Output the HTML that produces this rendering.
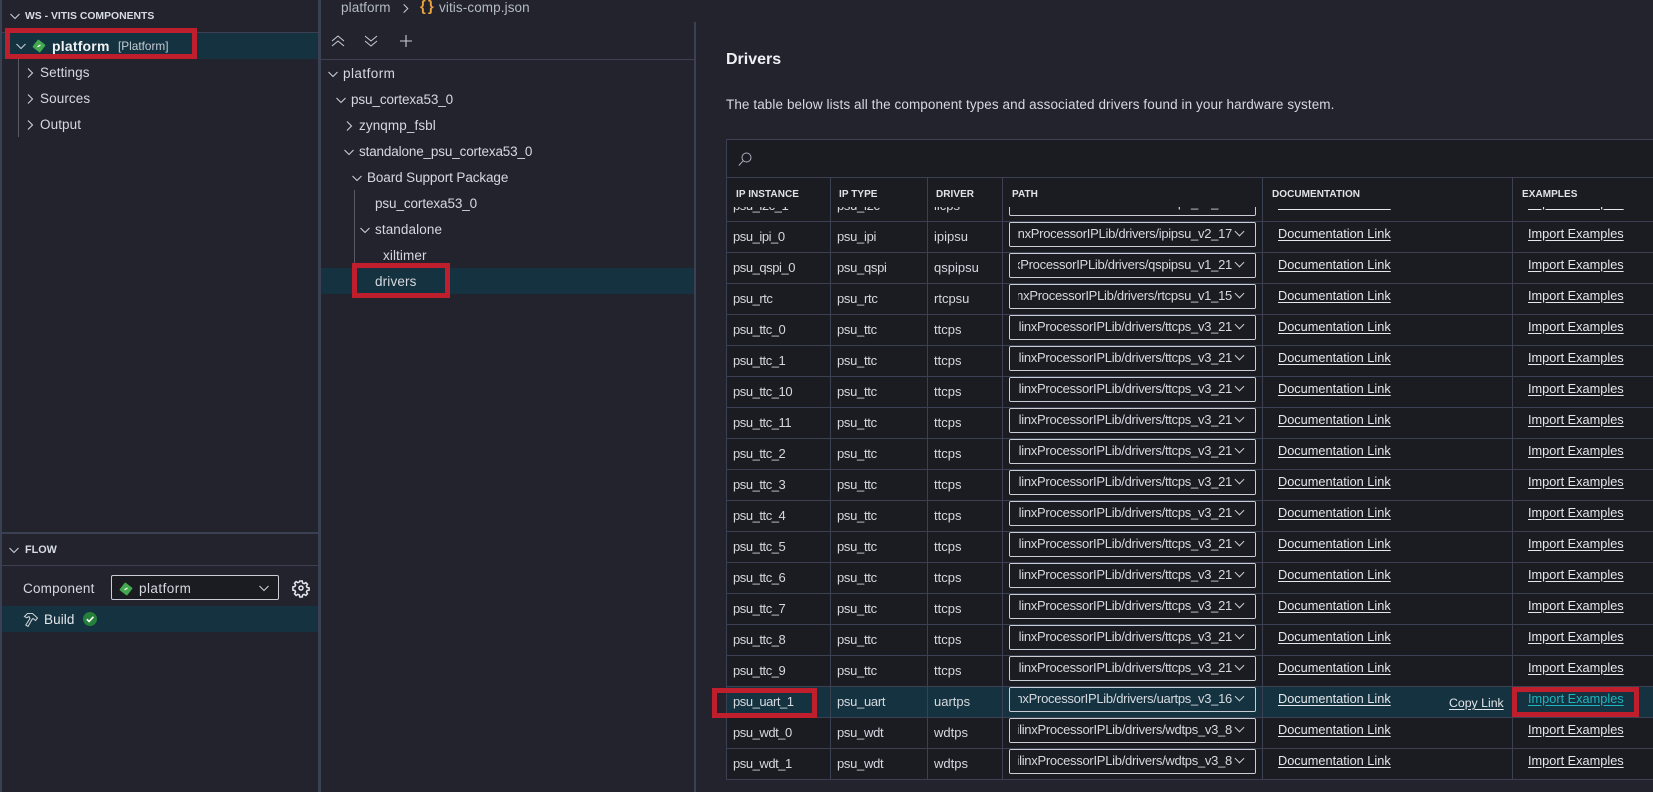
<!DOCTYPE html>
<html lang="en">
<head>
<meta charset="utf-8">
<title>Drivers</title>
<style>
html,body{margin:0;padding:0;background:#22232d}
body{width:1653px;height:792px;overflow:hidden;position:relative;font:13px/18px "Liberation Sans",sans-serif;color:#d5d9df}
.a{position:absolute;white-space:nowrap}
.ln{position:absolute;background:#3b4052}
.sel{position:absolute;background:#14323f}
.red{position:absolute;box-sizing:border-box;border:5px solid #bf1e2c;z-index:5}
svg{position:absolute;overflow:visible;fill:none;stroke:#c9ced6;stroke-width:1.1}
.t{font-size:13.5px;letter-spacing:.1px}
#wrap{position:absolute;left:726px;top:207px;width:927px;height:573px;overflow:hidden}
table{position:absolute;left:0;top:-16px;border-collapse:separate;border-spacing:0;table-layout:fixed;width:927px;background:#1b1c22}
td{box-sizing:border-box;height:31px;padding:0;border-bottom:1px solid #3b4052;border-right:1px solid #3b4052;white-space:nowrap;vertical-align:middle}
td:nth-child(1){border-left:1px solid #3b4052;padding-left:6px;letter-spacing:-.45px}
td:nth-child(2){padding-left:6px;letter-spacing:-.3px}
td:nth-child(3){padding-left:6px}
td:nth-child(4),td:nth-child(5),td:nth-child(6){position:relative;vertical-align:top}
td:nth-child(6){border-right:0}
tr.on td{background:#14323f}
.s{position:absolute;left:6px;top:0;width:247px;height:25px;box-sizing:border-box;border:1px solid #c9ced6;border-radius:2px;background:#1b1c22;overflow:hidden}
tr.on .s{background:#14323f}
.s span{position:absolute;right:23px;top:2px;white-space:nowrap;font-size:13px;letter-spacing:-.28px;color:#d5d9df}
.s::before{content:"";position:absolute;left:0;top:0;width:8px;height:23px;background:inherit;z-index:1}
.s::after{content:"";position:absolute;right:12px;top:5px;width:6px;height:6px;border-right:1.2px solid #c9ced6;border-bottom:1.2px solid #c9ced6;transform:rotate(45deg)}
.s i{position:absolute;right:0;top:0;width:23px;height:23px;background:inherit}
u{position:absolute;top:3px;color:#e4e7eb;text-underline-offset:2px;font-size:12.75px}
td:nth-child(5) u{left:15px}
td:nth-child(6) u{left:15px}
.h{position:absolute;top:186px;font-size:10px;font-weight:bold;color:#dfe3e8;letter-spacing:.05px}
</style>
</head>
<body>
<svg width="0" height="0" style="position:absolute"><defs>
<symbol id="d" viewBox="0 0 12 12" overflow="visible"><path d="M1.5 4l4.5 4.5L10.5 4"/></symbol>
<symbol id="r" viewBox="0 0 12 12" overflow="visible"><path d="M4 1.5l4.5 4.5L4 10.5"/></symbol>
<symbol id="g" viewBox="0 0 14 14"><rect x="2.2" y="2.2" width="9.600" height="9.600" rx="1" fill="#43a84e" stroke="none" transform="rotate(38 7 7)"/><path d="M5.500 7.800l3-1.800" stroke="#fff" stroke-width="1.200"/></symbol>
</defs></svg>

<!-- left panel -->
<div class="ln" style="left:0;top:0;width:2px;height:792px"></div>
<div class="ln" style="left:318px;top:0;width:3px;height:792px"></div>
<svg style="left:9px;top:10px" width="12" height="12"><use href="#d"/></svg>
<div class="a" style="left:25px;top:8px;font-size:10.4px;font-weight:bold;color:#d8dce2">WS - VITIS COMPONENTS</div>
<div class="ln" style="left:2px;top:32px;width:316px;height:1px"></div>
<div class="sel" style="left:2px;top:33px;width:316px;height:26px"></div>
<svg style="left:15px;top:40px" width="12" height="12"><use href="#d"/></svg>
<svg style="left:32px;top:39px" width="14" height="14"><use href="#g"/></svg>
<div class="a" style="left:52px;top:37px;font-size:14px;font-weight:bold;color:#f0f2f4;letter-spacing:.2px">platform</div>
<div class="a" style="left:118px;top:37px;font-size:11.8px;color:#c4cad2">[Platform]</div>
<div class="red" style="left:5px;top:28px;width:192px;height:31px"></div>
<div class="ln" style="left:18px;top:59px;width:1px;height:78px;background:#555a66"></div>
<svg style="left:24px;top:67px" width="12" height="12"><use href="#r"/></svg>
<div class="a t" style="left:40px;top:64px">Settings</div>
<svg style="left:24px;top:93px" width="12" height="12"><use href="#r"/></svg>
<div class="a t" style="left:40px;top:90px">Sources</div>
<svg style="left:24px;top:119px" width="12" height="12"><use href="#r"/></svg>
<div class="a t" style="left:40px;top:116px">Output</div>

<div class="ln" style="left:2px;top:532px;width:316px;height:2px"></div>
<svg style="left:8px;top:544px" width="12" height="12"><use href="#d"/></svg>
<div class="a" style="left:25px;top:541px;font-size:10.8px;font-weight:bold;color:#d8dce2">FLOW</div>
<div class="ln" style="left:2px;top:565px;width:316px;height:1px"></div>
<div class="a t" style="left:23px;top:580px;letter-spacing:.2px">Component</div>
<div class="a" style="left:111px;top:575px;width:168px;height:25px;box-sizing:border-box;border:1px solid #c9ced6;border-radius:2px;background:#1b1c22"></div>
<svg style="left:119px;top:582px" width="14" height="14"><use href="#g"/></svg>
<div class="a t" style="left:139px;top:580px;letter-spacing:.45px">platform</div>
<svg style="left:258px;top:582px" width="12" height="12"><use href="#d"/></svg>
<svg style="left:293px;top:580px;stroke:#e4e7eb;stroke-width:1.500" width="16" height="16" viewBox="0 0 16 16"><circle cx="8" cy="8" r="2"/><path d="M6.800 1h2.400l.4 2 1.500.7 1.800-1.100 1.600 1.600-1.100 1.800.7 1.500 2 .4v2.200l-2 .4-.7 1.500 1.100 1.800-1.600 1.600-1.800-1.100-1.500.7-.4 2H6.800l-.4-2-1.500-.7-1.800 1.100-1.600-1.600 1.100-1.800-.7-1.500-2-.4V6.900l2-.4.7-1.500-1.100-1.800 1.600-1.600 1.800 1.100 1.500-.7z"/></svg>
<div class="sel" style="left:2px;top:606px;width:316px;height:26px"></div>
<svg style="left:24px;top:613px;stroke:#c9ced6" width="14" height="14" viewBox="0 0 14 14"><path d="M.5 3.500L3.500.5h5l5 4.500-2 2.500-2.500-2-1 1L4 13.500 1.800 12 6 5.500 5 3.500 2.800 4.700z"/></svg>
<div class="a t" style="left:44px;top:611px;color:#e4e7eb">Build</div>
<svg style="left:83px;top:612px" width="14" height="14" viewBox="0 0 14 14"><circle cx="7" cy="7" r="7" fill="#25803a" stroke="none"/><path d="M3.800 7.200l2.300 2.300 4.300-4.700" stroke="#fff" stroke-width="1.600"/></svg>

<!-- breadcrumb -->
<div class="a t" style="left:341px;top:-1px;color:#b4bac3">platform</div>
<svg style="left:400px;top:3px" width="11" height="11"><use href="#r"/></svg>
<div class="a" style="left:420px;top:-2px;font-size:15px;font-weight:bold;color:#e8a33d;letter-spacing:2px">{}</div>
<div class="a t" style="left:439px;top:-1px;color:#b4bac3">vitis-comp.json</div>

<!-- tree -->
<svg style="left:331px;top:34px;stroke-width:1" width="14" height="14" viewBox="0 0 14 14"><path d="M1 7l6-5 6 5M1 12l6-5 6 5"/></svg>
<svg style="left:364px;top:34px;stroke-width:1" width="14" height="14" viewBox="0 0 14 14"><path d="M1 2l6 5 6-5M1 7l6 5 6-5"/></svg>
<svg style="left:399px;top:34px;stroke-width:1.100" width="14" height="14" viewBox="0 0 14 14"><path d="M7 1v12M1 7h12"/></svg>
<div class="ln" style="left:321px;top:59px;width:374px;height:1px"></div>
<div class="ln" style="left:694px;top:22px;width:2px;height:770px"></div>
<div class="sel" style="left:321px;top:268px;width:373px;height:26px"></div>
<div class="ln" style="left:354px;top:190px;width:1px;height:78px;background:#555a66"></div>
<svg style="left:327px;top:68px" width="12" height="12"><use href="#d"/></svg>
<div class="a t" style="left:343px;top:65px;letter-spacing:.45px">platform</div>
<svg style="left:335px;top:94px" width="12" height="12"><use href="#d"/></svg>
<div class="a t" style="left:351px;top:91px;letter-spacing:-.1px">psu_cortexa53_0</div>
<svg style="left:343px;top:120px" width="12" height="12"><use href="#r"/></svg>
<div class="a t" style="left:359px;top:117px">zynqmp_fsbl</div>
<svg style="left:343px;top:146px" width="12" height="12"><use href="#d"/></svg>
<div class="a t" style="left:359px;top:143px;letter-spacing:-.15px">standalone_psu_cortexa53_0</div>
<svg style="left:351px;top:172px" width="12" height="12"><use href="#d"/></svg>
<div class="a t" style="left:367px;top:169px;letter-spacing:-.1px">Board Support Package</div>
<div class="a t" style="left:375px;top:195px;letter-spacing:-.1px">psu_cortexa53_0</div>
<svg style="left:359px;top:224px" width="12" height="12"><use href="#d"/></svg>
<div class="a t" style="left:375px;top:221px">standalone</div>
<div class="a t" style="left:383px;top:247px;letter-spacing:.1px">xiltimer</div>
<div class="a t" style="left:375px;top:273px;letter-spacing:.15px">drivers</div>
<div class="red" style="left:352px;top:263px;width:98px;height:35px"></div>

<!-- content -->
<div class="a" style="left:726px;top:50px;font-size:16px;line-height:20px;font-weight:bold;color:#eef0f3">Drivers</div>
<div class="a" style="left:726px;top:96px;font-size:13.5px;letter-spacing:.09px">The table below lists all the component types and associated drivers found in your hardware system.</div>

<div class="a" style="left:726px;top:139px;width:927px;height:68px;background:#1b1c22"></div>
<div class="ln" style="left:726px;top:139px;width:927px;height:1px"></div>
<div class="ln" style="left:726px;top:177px;width:927px;height:1px"></div>
<div class="ln" style="left:726px;top:207px;width:927px;height:1px"></div>
<div class="ln" style="left:726px;top:139px;width:1px;height:68px"></div>
<div class="ln" style="left:830px;top:177px;width:1px;height:30px"></div>
<div class="ln" style="left:927px;top:177px;width:1px;height:30px"></div>
<div class="ln" style="left:1002px;top:177px;width:1px;height:30px"></div>
<div class="ln" style="left:1262px;top:177px;width:1px;height:30px"></div>
<div class="ln" style="left:1512px;top:177px;width:1px;height:30px"></div>
<svg style="left:738px;top:152px;stroke:#aab0ba;stroke-width:1" width="14" height="14" viewBox="0 0 14 14"><circle cx="8.500" cy="5.500" r="4.500"/><path d="M5.300 8.700L.8 13.500"/></svg>
<div class="h" style="left:736px">IP INSTANCE</div>
<div class="h" style="left:839px">IP TYPE</div>
<div class="h" style="left:936px">DRIVER</div>
<div class="h" style="left:1012px">PATH</div>
<div class="h" style="left:1272px">DOCUMENTATION</div>
<div class="h" style="left:1522px">EXAMPLES</div>

<div id="wrap">
<table>
<colgroup><col style="width:105px"><col style="width:97px"><col style="width:75px"><col style="width:260px"><col style="width:250px"><col style="width:140px"></colgroup>
<tr><td>psu_i2c_1</td><td>psu_i2c</td><td>iicps</td><td><div class="s"><span>XilinxProcessorIPLib/drivers/iicps_v3_18</span><i></i></div></td><td><u>Documentation Link</u></td><td><u>Import Examples</u></td></tr>
<tr><td>psu_ipi_0</td><td>psu_ipi</td><td>ipipsu</td><td><div class="s"><span>XilinxProcessorIPLib/drivers/ipipsu_v2_17</span><i></i></div></td><td><u>Documentation Link</u></td><td><u>Import Examples</u></td></tr>
<tr><td>psu_qspi_0</td><td>psu_qspi</td><td>qspipsu</td><td><div class="s"><span>XilinxProcessorIPLib/drivers/qspipsu_v1_21</span><i></i></div></td><td><u>Documentation Link</u></td><td><u>Import Examples</u></td></tr>
<tr><td>psu_rtc</td><td>psu_rtc</td><td>rtcpsu</td><td><div class="s"><span>XilinxProcessorIPLib/drivers/rtcpsu_v1_15</span><i></i></div></td><td><u>Documentation Link</u></td><td><u>Import Examples</u></td></tr>
<tr><td>psu_ttc_0</td><td>psu_ttc</td><td>ttcps</td><td><div class="s"><span>XilinxProcessorIPLib/drivers/ttcps_v3_21</span><i></i></div></td><td><u>Documentation Link</u></td><td><u>Import Examples</u></td></tr>
<tr><td>psu_ttc_1</td><td>psu_ttc</td><td>ttcps</td><td><div class="s"><span>XilinxProcessorIPLib/drivers/ttcps_v3_21</span><i></i></div></td><td><u>Documentation Link</u></td><td><u>Import Examples</u></td></tr>
<tr><td>psu_ttc_10</td><td>psu_ttc</td><td>ttcps</td><td><div class="s"><span>XilinxProcessorIPLib/drivers/ttcps_v3_21</span><i></i></div></td><td><u>Documentation Link</u></td><td><u>Import Examples</u></td></tr>
<tr><td>psu_ttc_11</td><td>psu_ttc</td><td>ttcps</td><td><div class="s"><span>XilinxProcessorIPLib/drivers/ttcps_v3_21</span><i></i></div></td><td><u>Documentation Link</u></td><td><u>Import Examples</u></td></tr>
<tr><td>psu_ttc_2</td><td>psu_ttc</td><td>ttcps</td><td><div class="s"><span>XilinxProcessorIPLib/drivers/ttcps_v3_21</span><i></i></div></td><td><u>Documentation Link</u></td><td><u>Import Examples</u></td></tr>
<tr><td>psu_ttc_3</td><td>psu_ttc</td><td>ttcps</td><td><div class="s"><span>XilinxProcessorIPLib/drivers/ttcps_v3_21</span><i></i></div></td><td><u>Documentation Link</u></td><td><u>Import Examples</u></td></tr>
<tr><td>psu_ttc_4</td><td>psu_ttc</td><td>ttcps</td><td><div class="s"><span>XilinxProcessorIPLib/drivers/ttcps_v3_21</span><i></i></div></td><td><u>Documentation Link</u></td><td><u>Import Examples</u></td></tr>
<tr><td>psu_ttc_5</td><td>psu_ttc</td><td>ttcps</td><td><div class="s"><span>XilinxProcessorIPLib/drivers/ttcps_v3_21</span><i></i></div></td><td><u>Documentation Link</u></td><td><u>Import Examples</u></td></tr>
<tr><td>psu_ttc_6</td><td>psu_ttc</td><td>ttcps</td><td><div class="s"><span>XilinxProcessorIPLib/drivers/ttcps_v3_21</span><i></i></div></td><td><u>Documentation Link</u></td><td><u>Import Examples</u></td></tr>
<tr><td>psu_ttc_7</td><td>psu_ttc</td><td>ttcps</td><td><div class="s"><span>XilinxProcessorIPLib/drivers/ttcps_v3_21</span><i></i></div></td><td><u>Documentation Link</u></td><td><u>Import Examples</u></td></tr>
<tr><td>psu_ttc_8</td><td>psu_ttc</td><td>ttcps</td><td><div class="s"><span>XilinxProcessorIPLib/drivers/ttcps_v3_21</span><i></i></div></td><td><u>Documentation Link</u></td><td><u>Import Examples</u></td></tr>
<tr><td>psu_ttc_9</td><td>psu_ttc</td><td>ttcps</td><td><div class="s"><span>XilinxProcessorIPLib/drivers/ttcps_v3_21</span><i></i></div></td><td><u>Documentation Link</u></td><td><u>Import Examples</u></td></tr>
<tr class="on"><td>psu_uart_1</td><td>psu_uart</td><td>uartps</td><td><div class="s"><span>XilinxProcessorIPLib/drivers/uartps_v3_16</span><i></i></div></td><td><u>Documentation Link</u><u style="left:186px;top:7px;font-size:12.300px">Copy Link</u></td><td><u style="color:#1fb5c0">Import Examples</u></td></tr>
<tr><td>psu_wdt_0</td><td>psu_wdt</td><td>wdtps</td><td><div class="s"><span>XilinxProcessorIPLib/drivers/wdtps_v3_8</span><i></i></div></td><td><u>Documentation Link</u></td><td><u>Import Examples</u></td></tr>
<tr><td>psu_wdt_1</td><td>psu_wdt</td><td>wdtps</td><td><div class="s"><span>XilinxProcessorIPLib/drivers/wdtps_v3_8</span><i></i></div></td><td><u>Documentation Link</u></td><td><u>Import Examples</u></td></tr>
</table>
</div>

<div class="red" style="left:712px;top:688px;width:105px;height:30px"></div>
<div class="red" style="left:1512px;top:687px;width:127px;height:30px"></div>
</body>
</html>
